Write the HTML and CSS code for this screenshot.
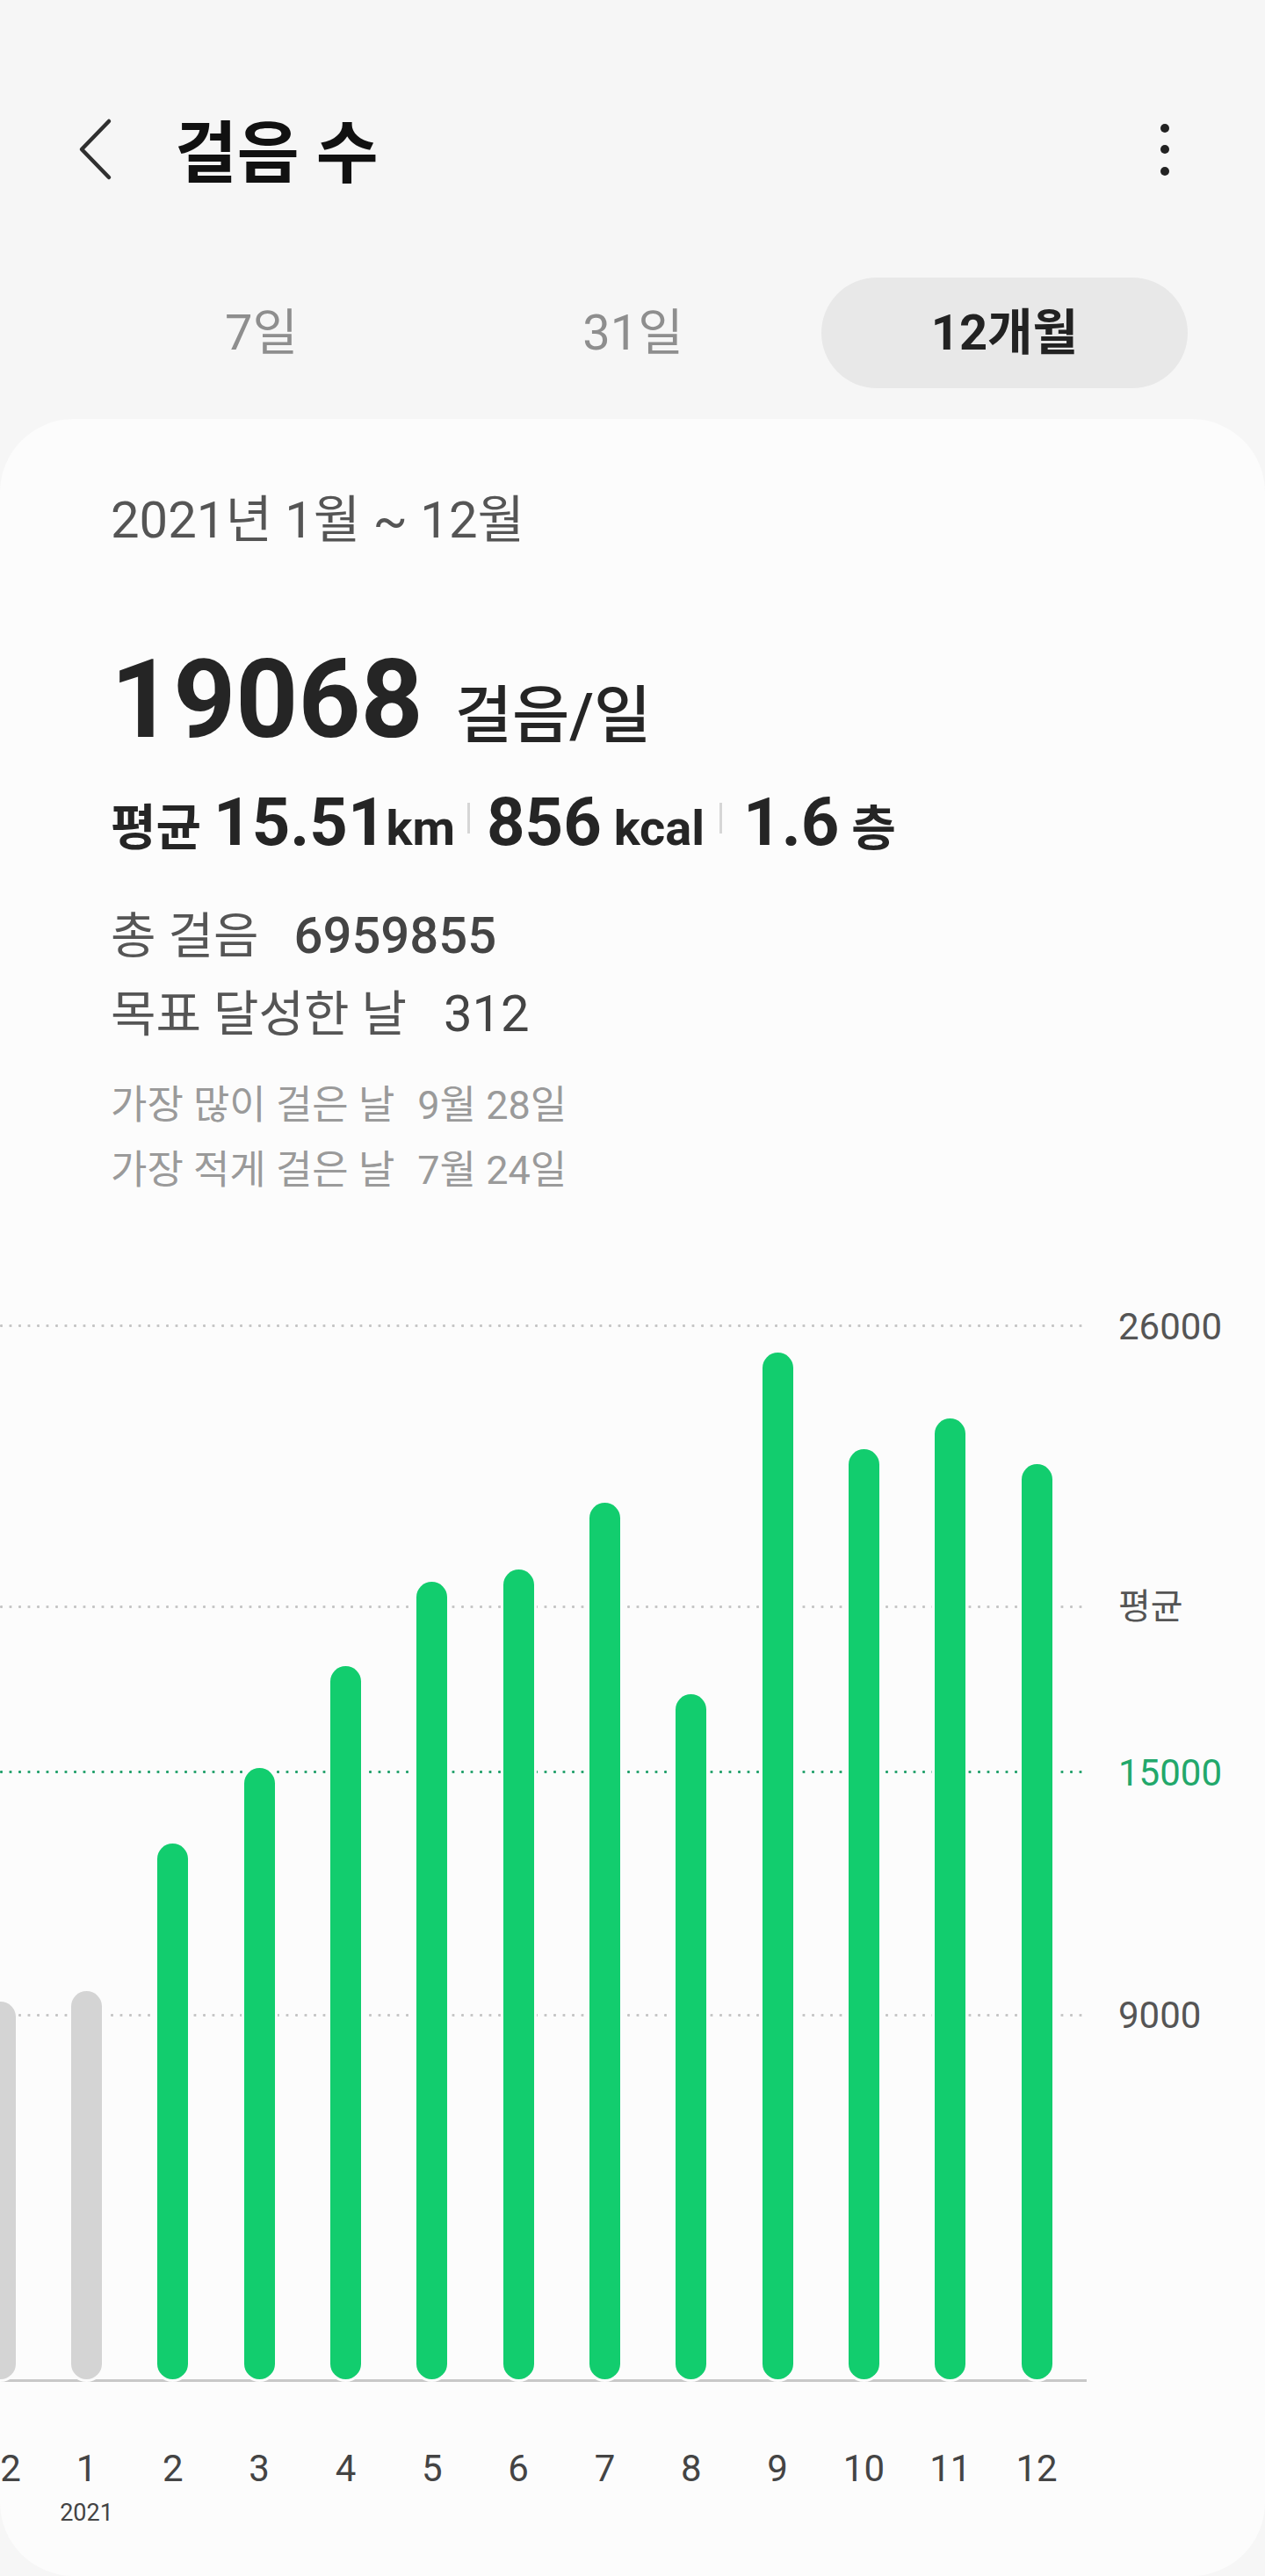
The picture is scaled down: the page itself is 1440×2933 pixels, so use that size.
FILE: index.html
```html
<!DOCTYPE html>
<html lang="ko">
<head>
<meta charset="utf-8">
<title>걸음 수</title>
<link rel="stylesheet" href="styles.css">
</head>
<body>
<div class="screen">
  <header class="appbar">
    <svg class="back" width="40" height="72" viewBox="0 0 40 72" aria-hidden="true">
      <polyline points="36,4 5,36 36,68" fill="none" stroke="#303030" stroke-width="4.5" stroke-linecap="round" stroke-linejoin="round"/>
    </svg>
    <h1 class="title">걸음 수</h1>
    <div class="more"><span></span><span></span><span></span></div>
  </header>

  <nav class="tabs">
    <div class="tab">7일</div>
    <div class="tab">31일</div>
    <div class="tab active">12개월</div>
  </nav>

  <section class="card">
    <div class="summary">
      <div class="range">2021년 1월 ~ 12월</div>
      <div class="big"><span class="big-num">19068</span><span class="big-unit">걸음/일</span></div>
      <div class="stats">
        <span class="s-lbl">평균</span><span class="s-num first">15.51</span><span class="s-unit">km</span><i class="sep sep1"></i><span class="s-num">856</span><span class="s-unit spaced">kcal</span><i class="sep sep2"></i><span class="s-num">1.6</span><span class="s-floor">층</span>
      </div>
      <div class="trow r1"><span class="t-lbl">총 걸음</span><span class="t-val strong">6959855</span></div>
      <div class="trow r2"><span class="t-lbl">목표 달성한 날</span><span class="t-val">312</span></div>
      <div class="drow r3"><span class="d-lbl">가장 많이 걸은 날</span><span class="d-val">9월 28일</span></div>
      <div class="drow r4"><span class="d-lbl">가장 적게 걸은 날</span><span class="d-val">7월 24일</span></div>
    </div>

    <div class="chart">
      <div class="plot-wrap">
        <div class="plot">
          <div class="grid" style="bottom:1198px"></div>
          <div class="grid" style="bottom:878px"></div>
          <div class="grid goal" style="bottom:690px"></div>
          <div class="grid" style="bottom:413px"></div>

          <div class="col lead"><div class="bar past" style="height:430px"></div></div>
          <div class="col"><div class="bar past" style="height:442px"></div></div>
          <div class="col"><div class="bar" style="height:610px"></div></div>
          <div class="col"><div class="bar" style="height:696px"></div></div>
          <div class="col"><div class="bar" style="height:812px"></div></div>
          <div class="col"><div class="bar" style="height:908px"></div></div>
          <div class="col"><div class="bar" style="height:922px"></div></div>
          <div class="col"><div class="bar" style="height:998px"></div></div>
          <div class="col"><div class="bar" style="height:780px"></div></div>
          <div class="col"><div class="bar" style="height:1169px"></div></div>
          <div class="col"><div class="bar" style="height:1059px"></div></div>
          <div class="col"><div class="bar" style="height:1094px"></div></div>
          <div class="col"><div class="bar" style="height:1042px"></div></div>
        </div>
        <div class="axis">
          <span class="ylab" style="bottom:1198px">26000</span>
          <span class="ylab avg" style="bottom:879px">평균</span>
          <span class="ylab goal" style="bottom:690px">15000</span>
          <span class="ylab" style="bottom:414px">9000</span>
        </div>
      </div>
      <div class="xlabels">
        <div class="xl lead">12</div>
        <div class="xl">1<span class="year">2021</span></div>
        <div class="xl">2</div>
        <div class="xl">3</div>
        <div class="xl">4</div>
        <div class="xl">5</div>
        <div class="xl">6</div>
        <div class="xl">7</div>
        <div class="xl">8</div>
        <div class="xl">9</div>
        <div class="xl">10</div>
        <div class="xl">11</div>
        <div class="xl">12</div>
      </div>
    </div>
  </section>
</div>
</body>
</html>
```

FILE: styles.css
```css
* { box-sizing: border-box; }

html, body {
  margin: 0;
  padding: 0;
}

body {
  background: #f6f6f6;
  width: 1440px;
  height: 2933px;
  overflow: hidden;
}

.screen {
  font-family: Roboto, "Noto Sans CJK KR", sans-serif;
  color: #252525;
  width: 1440px;
}

/* ---------- app bar ---------- */
.appbar {
  display: flex;
  align-items: center;
  height: 230px;
  padding: 110px 109px 0 88px;
}

.back {
  flex: none;
  display: block;
}

.title {
  margin: 0 auto 0 71px;
  padding-top: 12px;
  font-size: 77px;
  font-weight: 700;
  line-height: 1;
  color: #111;
}

.more {
  display: flex;
  flex-direction: column;
  gap: 14.5px;
}

.more span {
  display: block;
  width: 10px;
  height: 10px;
  border-radius: 50%;
  background: #222;
}

/* ---------- tabs ---------- */
.tabs {
  display: grid;
  grid-template-columns: repeat(3, 423px);
  margin: 86px 0 0 86px;
  height: 126px;
}

.tab {
  display: flex;
  align-items: center;
  justify-content: center;
  font-size: 56px;
  line-height: 1;
  color: #8e8e8e;
}

.tab.active {
  margin: 0 3px;
  border-radius: 63px;
  background: #e8e8e8;
  color: #222;
  font-weight: 700;
}

/* ---------- card ---------- */
.card {
  margin-top: 35px;
  height: 2456px;
  background: #fcfcfc;
  border-radius: 84px;
  overflow: hidden;
}

.summary {
  padding: 86px 0 0 126px;
}

.range {
  font-size: 58px;
  line-height: 1;
  color: #555;
}

.big {
  display: flex;
  align-items: baseline;
  margin-top: 114px;
  line-height: 1;
}

.big-num {
  font-size: 124px;
  font-weight: 700;
  color: #252525;
}

.big-unit {
  margin-left: 36px;
  font-size: 71px;
  font-weight: 500;
  color: #252525;
}

.stats {
  display: flex;
  align-items: baseline;
  margin-top: 39px;
  line-height: 1;
  color: #252525;
}

.s-lbl {
  font-size: 56px;
  font-weight: 700;
}

.s-num {
  font-size: 76px;
  font-weight: 700;
}

.s-num.first {
  margin-left: 14px;
}

.s-unit {
  font-size: 56px;
  font-weight: 700;
}

.s-unit.spaced {
  margin-left: 14px;
}

.s-floor {
  margin-left: 14px;
  font-size: 55px;
  font-weight: 700;
}

.sep {
  align-self: flex-start;
  display: block;
  width: 3px;
  height: 35px;
  margin-top: 16px;
  background: #d6d6d6;
}

.sep1 { margin-left: 14px; margin-right: 19px; }
.sep2 { margin-left: 17px; margin-right: 24px; }

.trow,
.drow {
  display: flex;
  align-items: baseline;
  line-height: 1;
}

.trow.r1 { margin-top: 62px; }
.trow.r2 { margin-top: 31px; }
.drow.r3 { margin-top: 53px; }
.drow.r4 { margin-top: 29px; }

.t-lbl {
  font-size: 56px;
  color: #555;
}

.t-val {
  margin-left: 42px;
  font-size: 58px;
  font-weight: 400;
  color: #444;
}

.t-val.strong {
  margin-left: 40px;
  font-weight: 500;
}

.d-lbl,
.d-val {
  font-size: 45px;
  color: #9a9a9a;
}

.d-val {
  margin-left: 26px;
}

/* ---------- chart ---------- */
.chart {
  margin-top: 104px;
}

.plot-wrap {
  display: flex;
}

.plot {
  position: relative;
  display: flex;
  width: 1237px;
  height: 1253px;
  border-bottom: 3px solid #c8c8c8;
}

.grid {
  position: absolute;
  left: 0;
  right: 0;
  height: 3px;
  background-image: radial-gradient(circle at 1.5px 1.5px, #c4c4c4 1.3px, rgba(196,196,196,0) 1.7px);
  background-size: 10.5px 3px;
  background-repeat: repeat-x;
}

.grid.goal {
  background-image: radial-gradient(circle at 1.5px 1.5px, #1f9f69 1.3px, rgba(31,159,105,0) 1.7px);
}

.col {
  position: relative;
  flex: 0 0 98.33px;
  display: flex;
  justify-content: center;
  align-items: flex-end;
}

.col.lead,
.xl.lead {
  margin-left: -49px;
}

.bar {
  width: 35px;
  border-radius: 17.5px;
  background: #12cd6e;
  box-shadow: 0 0 0 3px #fcfcfc;
}

.bar.past {
  background: #d4d4d4;
}

.axis {
  position: relative;
  flex: 1;
  margin-bottom: 3px;
}

.ylab {
  position: absolute;
  left: 36px;
  font-size: 42px;
  line-height: 42px;
  color: #555;
  transform: translateY(50%);
  white-space: nowrap;
}

.ylab.avg {
  font-size: 40px;
}

.ylab.goal {
  color: #22a86b;
}

.xlabels {
  display: flex;
  margin-top: 78px;
}

.xl {
  flex: 0 0 98.33px;
  display: flex;
  flex-direction: column;
  align-items: center;
  font-size: 42px;
  line-height: 1;
  color: #444;
}

.year {
  margin-top: 16px;
  font-size: 27px;
  line-height: 1;
  color: #444;
}
```
